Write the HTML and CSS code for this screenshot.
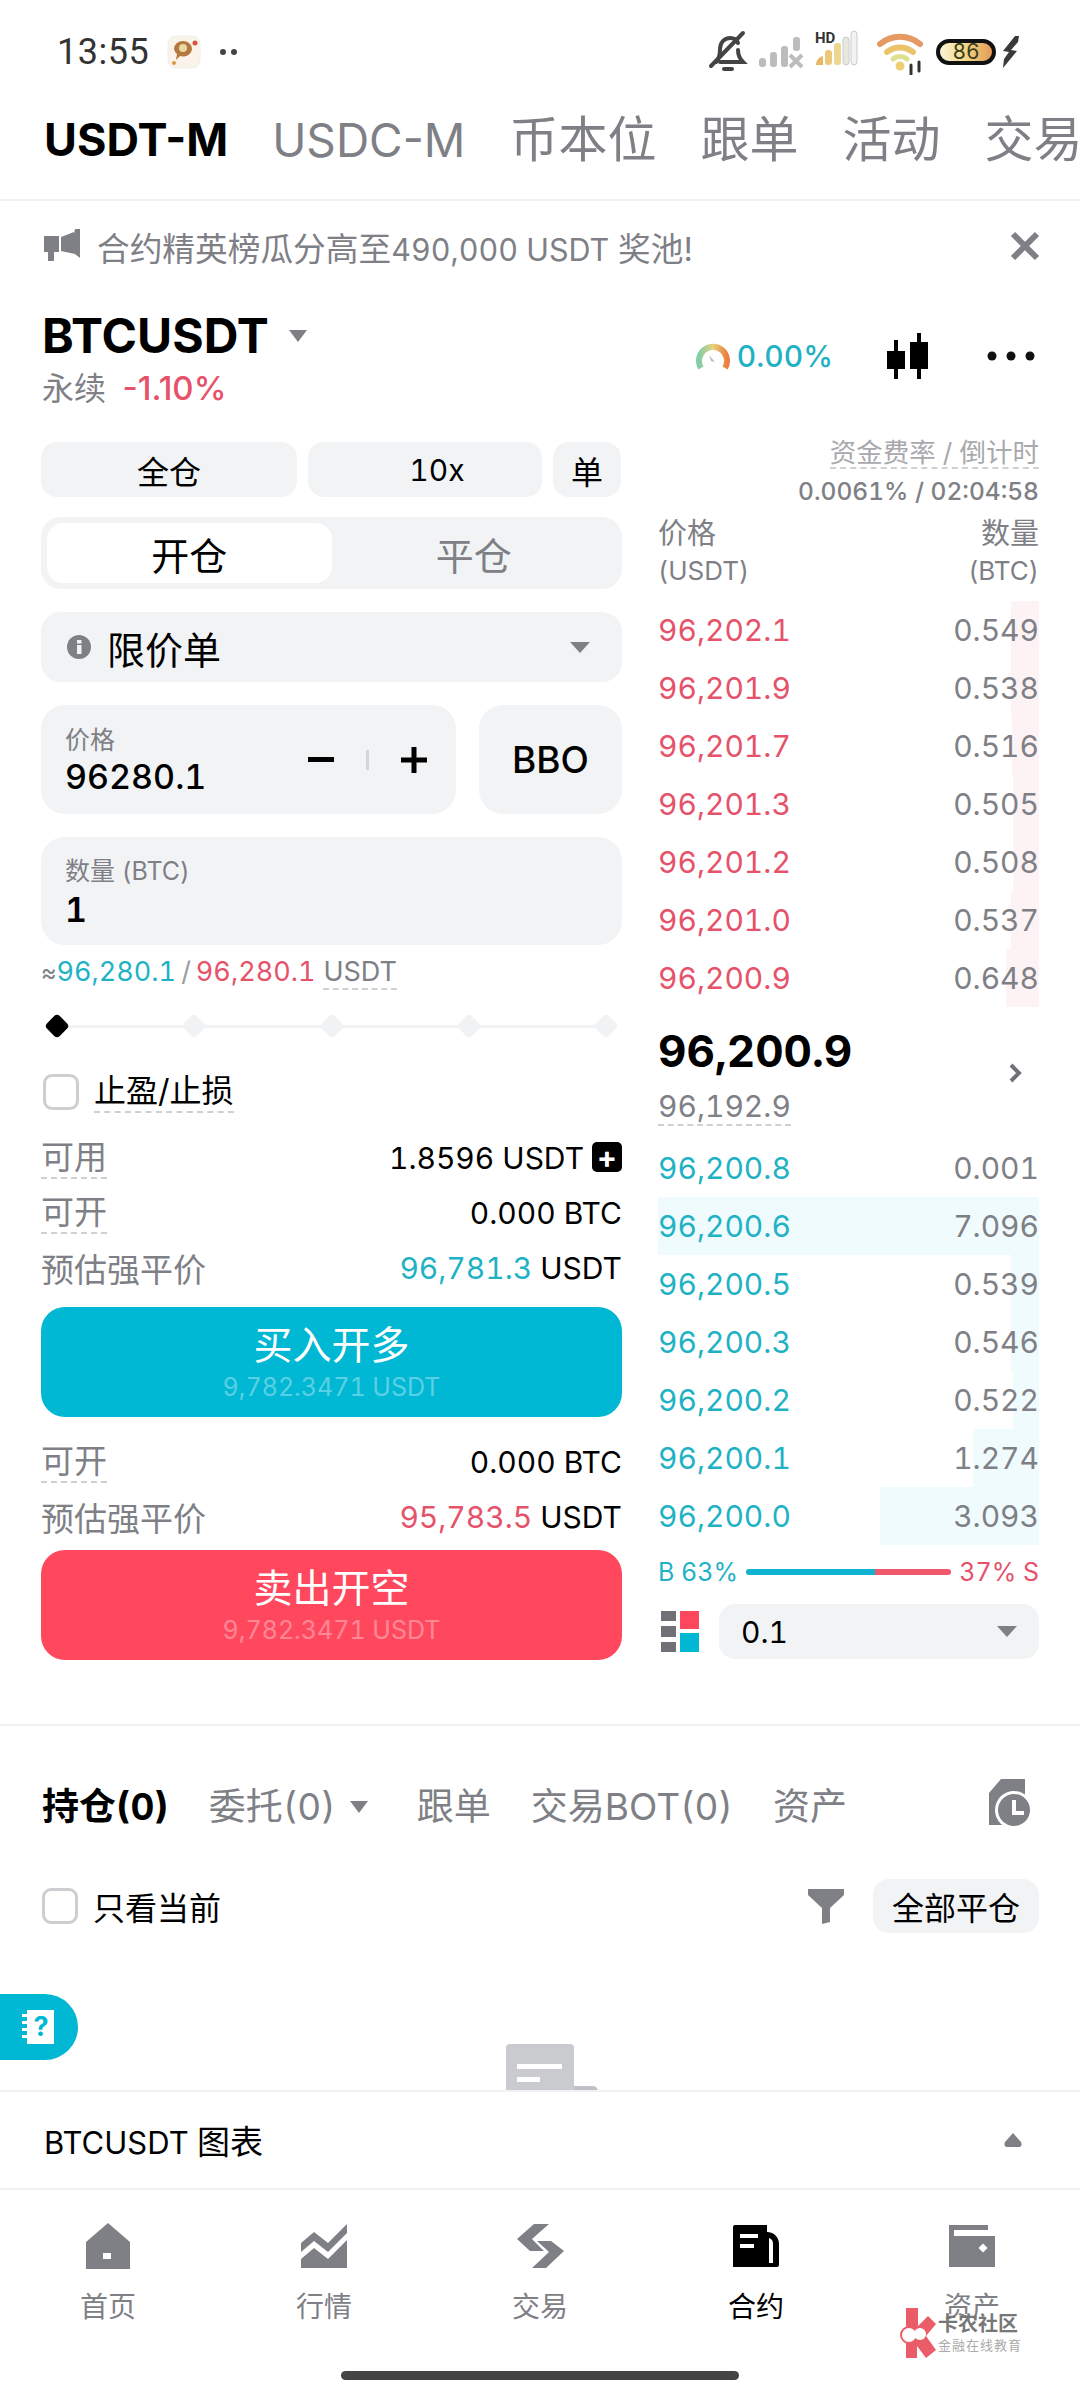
FILE: index.html
```html
<!DOCTYPE html>
<html lang="zh-CN">
  <head>
    <meta charset="UTF-8" />
    <meta name="viewport" content="width=device-width, initial-scale=1.0" />
    <title>合约交易</title>
    <link rel="stylesheet" href="styles.css">
  </head>
  <body>
    <div class="page">
      <!-- Status bar -->
      <div class="status-bar">
        <span class="time">13:55</span>
        <svg class="app-icon" width="36" height="36" viewBox="0 0 36 36">
          <rect x="2" y="2" width="32" height="32" rx="8" fill="#fbf3ea" stroke="#eee" />
          <path d="M8 15a9 8 0 0 1 18 0a9 8 0 0 1-12 7l-4 4l1-6a8 8 0 0 1-3-5z" fill="#b5793f" />
          <circle cx="17" cy="14" r="4" fill="#e8d9a0" />
          <circle cx="29" cy="9" r="2.5" fill="#d8553f" />
          <circle cx="8" cy="29" r="2" fill="#d99a3f" />
        </svg>
        <span class="status-dots"><i></i><i></i></span>
        <div class="status-right">
          <svg class="bell" width="40" height="44" viewBox="0 0 40 44" fill="none" stroke="#444" stroke-width="4" stroke-linecap="round">
            <path d="M8 32c3-3 4-7 4-13c0-6 4-11 10-11c4 0 7 2 8 5M30 20c0 5 2 9 5 12H12" />
            <path d="M3 36L35 3" />
            <path d="M16 39h8" />
          </svg>
          <svg width="50" height="40" viewBox="0 0 50 40" fill="#bcbcbc">
            <rect x="2" y="26" width="7" height="9" rx="3" />
            <rect x="13" y="20" width="7" height="15" rx="3" />
            <rect x="24" y="14" width="7" height="21" rx="3" />
            <rect x="36" y="5" width="7" height="14" rx="3" />
            <path d="M33 23l12 12M45 23l-12 12" stroke="#bcbcbc" stroke-width="4" />
          </svg>
          <div class="hd-signal">
            <span class="hd">HD</span>
            <svg width="44" height="38" viewBox="0 0 44 38">
              <path d="M1 35c0-5 3-8 7-9v9z" fill="#e6b96a" />
              <rect x="10" y="20" width="7" height="15" rx="3" fill="#ecc97a" />
              <rect x="19" y="13" width="7" height="22" rx="3" fill="#ecd78f" />
              <rect x="28" y="7" width="6" height="28" rx="3" fill="#e8e8e0" stroke="#ccc" />
              <rect x="36" y="1" width="6" height="34" rx="3" fill="#f2f2f2" stroke="#ccc" />
            </svg>
          </div>
          <svg class="wifi" width="50" height="46" viewBox="0 0 50 46" fill="none" stroke-linecap="round">
            <path d="M3 15a31 31 0 0 1 40 0" stroke="#e49a62" stroke-width="6" />
            <path d="M10 23a21 21 0 0 1 26 0" stroke="#eac36b" stroke-width="6" />
            <path d="M16 30a11 11 0 0 1 14 0" stroke="#dfe08e" stroke-width="5" />
            <circle cx="23" cy="37" r="4.500" fill="#efcf72" />
            <path d="M34 36v9M42 33v9" stroke="#333" stroke-width="3" />
          </svg>
          <div class="battery"><span>86</span></div>
          <svg width="18" height="32" viewBox="0 0 18 32" fill="#3a3a3a">
            <path d="M13 0L1 15l6 1l-5 7l-1 9l14-17l-6-1l7-8l1-6z" />
          </svg>
        </div>
      </div>

      <!-- Product tabs -->
      <div class="top-tabs">
        <a href="#" class="active">USDT-M</a>
        <a href="#">USDC-M</a>
        <a href="#" class="cjk">币本位</a>
        <a href="#" class="cjk">跟单</a>
        <a href="#" class="cjk">活动</a>
        <a href="#" class="cjk">交易</a>
      </div>

      <!-- Notice -->
      <div class="notice">
        <svg width="36" height="36" viewBox="0 0 36 36" fill="#7e8086">
          <path d="M0 8h15v16H10v9H4v-9H0z" />
          <path d="M17 9L30 4v2L31 1h5v29l-5-4L17 23z" />
        </svg>
        <span class="notice-text">合约精英榜瓜分高至<span class="latin">490,000 USDT</span> 奖池!</span>
        <svg class="notice-close" width="30" height="30" viewBox="0 0 30 30" stroke="#7e8086" stroke-width="6">
          <path d="M3 3l24 24M27 3L3 27" />
        </svg>
      </div>

      <!-- Symbol header -->
      <div class="symbol-head">
        <div>
          <div class="symbol-name">BTCUSDT<i class="caret small"></i></div>
          <div class="symbol-sub">永续 <span class="red">-1.10%</span></div>
        </div>
        <div class="symbol-tools">
          <svg width="34" height="28" viewBox="0 0 34 28" fill="none" stroke-width="6">
            <defs>
              <linearGradient id="gauge" x1="0" x2="1" y1="0" y2="0">
                <stop offset="0" stop-color="#7fcfa8" />
                <stop offset="0.5" stop-color="#e8d27a" />
                <stop offset="1" stop-color="#ea7f3f" />
              </linearGradient>
            </defs>
            <path d="M5 26a14 14 0 1 1 24 0" stroke="url(#gauge)" />
            <path d="M13 13l6 7l-4-1z" fill="#bbb" />
          </svg>
          <span class="gauge-value">0.00%</span>
          <svg class="candle" width="44" height="46" viewBox="0 0 44 46" fill="#000">
            <rect x="8" y="7" width="4" height="39" />
            <rect x="31" y="0" width="4" height="46" />
            <rect x="1" y="18" width="18" height="18" />
            <rect x="24" y="9" width="18" height="27" />
          </svg>
          <svg class="more" width="48" height="10" viewBox="0 0 48 10" fill="#111">
            <circle cx="5" cy="5" r="4.500" />
            <circle cx="24" cy="5" r="4.500" />
            <circle cx="43" cy="5" r="4.500" />
          </svg>
        </div>
      </div>

      <div class="trade">
        <!-- Order form -->
        <div class="form">
          <div class="margin-row">
            <a href="#" class="chip cross">全仓</a>
            <a href="#" class="chip lever">10x</a>
            <a href="#" class="chip mode">单</a>
          </div>
          <div class="switch">
            <span class="switch-item on">开仓</span>
            <span class="switch-item">平仓</span>
          </div>
          <div class="order-type">
            <svg width="24" height="24" viewBox="0 0 24 24">
              <circle cx="12" cy="12" r="12" fill="#7e8086" />
              <rect x="10" y="10" width="4.500" height="9" fill="#f2f3f5" />
              <rect x="10" y="5" width="4.500" height="3.500" fill="#f2f3f5" />
            </svg>
            <span class="order-type-text">限价单</span>
            <i class="caret"></i>
          </div>
          <div class="price-row">
            <div class="field price-field">
              <div>
                <div class="field-label">价格</div>
                <div class="field-value">96280.1</div>
              </div>
              <div class="stepper">
                <svg width="28" height="28" viewBox="0 0 28 28" fill="#000"><rect x="1" y="11" width="26" height="5" /></svg>
                <i class="stepper-line"></i>
                <svg width="28" height="28" viewBox="0 0 28 28" fill="#000"><path d="M1 11.500h10.500V1h5v10.500H27v5H16.500V27h-5V16.500H1z" /></svg>
              </div>
            </div>
            <a href="#" class="bbo">BBO</a>
          </div>
          <div class="field qty-field">
            <div class="field-label">数量 (BTC)</div>
            <div class="field-value">1</div>
          </div>
          <div class="approx">
            <span class="grey">≈</span><span class="teal">96,280.1</span>
            <span class="slash">/</span>
            <span class="red">96,280.1</span>
            <span class="approx-unit">USDT</span>
          </div>
          <div class="slider">
            <i class="node current"></i><i class="node"></i><i class="node"></i><i class="node"></i><i class="node"></i>
          </div>
          <label class="check tp-sl">
            <i class="box"></i>
            <span class="dashed">止盈/止损</span>
          </label>

          <div class="info-rows">
            <div class="info"><span class="info-key dashed">可用</span><span class="info-val">1.8596 USDT<b class="add">+</b></span></div>
            <div class="info"><span class="info-key dashed">可开</span><span class="info-val">0.000 BTC</span></div>
            <div class="info"><span class="info-key">预估强平价</span><span class="info-val"><span class="teal">96,781.3</span> USDT</span></div>
          </div>
          <a href="#" class="action buy">
            <span class="action-title">买入开多</span>
            <span class="action-sub">9,782.3471 USDT</span>
          </a>
          <div class="info-rows second">
            <div class="info"><span class="info-key dashed">可开</span><span class="info-val">0.000 BTC</span></div>
            <div class="info"><span class="info-key">预估强平价</span><span class="info-val"><span class="red">95,783.5</span> USDT</span></div>
          </div>
          <a href="#" class="action sell">
            <span class="action-title">卖出开空</span>
            <span class="action-sub">9,782.3471 USDT</span>
          </a>
        </div>

        <!-- Order book -->
        <div class="book">
          <div class="funding">
            <span class="funding-title">资金费率 / 倒计时</span>
            <span class="funding-value">0.0061% / 02:04:58</span>
          </div>
          <div class="book-head">
            <div><span class="head-cjk">价格</span><br />(USDT)</div>
            <div class="right"><span class="head-cjk">数量</span><br />(BTC)</div>
          </div>
          <div class="levels asks">
            <div class="level"><i class="depth" style="width:7.300%"></i><span>96,202.1</span><span>0.549</span></div>
            <div class="level"><i class="depth" style="width:7.300%"></i><span>96,201.9</span><span>0.538</span></div>
            <div class="level"><i class="depth" style="width:7%"></i><span>96,201.7</span><span>0.516</span></div>
            <div class="level"><i class="depth" style="width:6.800%"></i><span>96,201.3</span><span>0.505</span></div>
            <div class="level"><i class="depth" style="width:6.900%"></i><span>96,201.2</span><span>0.508</span></div>
            <div class="level"><i class="depth" style="width:7.300%"></i><span>96,201.0</span><span>0.537</span></div>
            <div class="level"><i class="depth" style="width:8.700%"></i><span>96,200.9</span><span>0.648</span></div>
          </div>
          <div class="mid">
            <div>
              <div class="mid-price">96,200.9</div>
              <div class="mark-price"><span class="dashed">96,192.9</span></div>
            </div>
            <svg width="14" height="20" viewBox="0 0 14 20" fill="none" stroke="#6f7177" stroke-width="4">
              <path d="M2 2l8 8l-8 8" />
            </svg>
          </div>
          <div class="levels bids">
            <div class="level"><span>96,200.8</span><span>0.001</span></div>
            <div class="level"><i class="depth" style="width:100%"></i><span>96,200.6</span><span>7.096</span></div>
            <div class="level"><i class="depth" style="width:7.300%"></i><span>96,200.5</span><span>0.539</span></div>
            <div class="level"><i class="depth" style="width:7.300%"></i><span>96,200.3</span><span>0.546</span></div>
            <div class="level"><i class="depth" style="width:6.900%"></i><span>96,200.2</span><span>0.522</span></div>
            <div class="level"><i class="depth" style="width:17.300%"></i><span>96,200.1</span><span>1.274</span></div>
            <div class="level"><i class="depth" style="width:41.700%"></i><span>96,200.0</span><span>3.093</span></div>
          </div>
          <div class="ratio">
            <span class="teal">B 63%</span>
            <div class="ratio-bar"><i class="ratio-buy"></i><i class="ratio-sell"></i></div>
            <span class="red">37% S</span>
          </div>
          <div class="tick-row">
            <svg width="38" height="42" viewBox="0 0 38 42">
              <rect x="0" y="0" width="15" height="10" fill="#6f7177" />
              <rect x="0" y="15" width="15" height="11" fill="#6f7177" />
              <rect x="0" y="31" width="15" height="10" fill="#6f7177" />
              <rect x="19" y="0" width="19" height="18" fill="#ff475d" />
              <rect x="19" y="22" width="19" height="19" fill="#00b7d4" />
            </svg>
            <div class="tick-select"><span>0.1</span><i class="caret"></i></div>
          </div>
        </div>
      </div>

      <!-- Positions -->
      <div class="positions">
        <div class="pos-tabs">
          <a href="#" class="active">持仓(0)</a>
          <a href="#" class="orders">委托(0)<i class="caret small"></i></a>
          <a href="#">跟单</a>
          <a href="#">交易BOT(0)</a>
          <a href="#">资产</a>
          <svg class="history" width="44" height="50" viewBox="0 0 44 50">
            <path d="M12 0h24v46H0V14z" fill="#7e8086" />
            <circle cx="25" cy="31" r="19" fill="#fff" />
            <circle cx="25" cy="31" r="16" fill="#7e8086" />
            <path d="M23 21h4v11h8v4H23z" fill="#fff" />
          </svg>
        </div>
        <div class="pos-filter">
          <label class="check">
            <i class="box"></i>
            <span class="only-current">只看当前</span>
          </label>
          <div class="pos-actions">
            <svg width="36" height="36" viewBox="0 0 36 36" fill="#7e8086">
              <path d="M0 1h36v6L22 20v14l-8 2V20L0 7z" />
            </svg>
            <a href="#" class="close-all">全部平仓</a>
          </div>
        </div>
        <div class="empty">
          <svg width="92" height="48" viewBox="0 0 92 48">
            <path d="M4 0h60a4 4 0 0 1 4 4v44H0V4a4 4 0 0 1 4-4z" fill="#c9cbcf" />
            <rect x="11" y="20" width="45" height="5" fill="#fff" />
            <rect x="11" y="33" width="23" height="5" fill="#fff" />
            <path d="M68 42h18q6 0 6 6H68z" fill="#bfc1c6" />
          </svg>
        </div>
        <div class="help">
          <svg width="32" height="34" viewBox="0 0 32 34" fill="#fff">
            <path d="M5 0h27v34H5zM0 4h7v3H0zM0 11h7v3H0zM0 18h7v3H0zM0 25h7v3H0z" />
            <text x="19" y="26" class="help-mark" text-anchor="middle">?</text>
          </svg>
        </div>
      </div>

      <div class="chart-bar">
        <span>BTCUSDT <span class="chart-cjk">图表</span></span>
        <svg width="18" height="14" viewBox="0 0 18 14" fill="#7e8086">
          <path d="M9 0L17 9q2 5-3 5H4q-5 0-3-5z" />
        </svg>
      </div>

      <!-- Bottom navigation -->
      <nav class="tab-bar">
        <a href="#">
          <svg width="46" height="46" viewBox="0 0 46 46">
            <path d="M23 0L45 19v27H1V19z" fill="#7e8086" />
            <rect x="18" y="30" width="8" height="6" fill="#fff" />
          </svg>
          首页
        </a>
        <a href="#">
          <svg width="46" height="46" viewBox="0 0 46 46" fill="#7e8086">
            <path d="M0 20L13 9L27 20L46 1V10L27 29L13 18L0 29z" />
            <path d="M0 36L13 25L27 36L46 17V45H0z" />
          </svg>
          行情
        </a>
        <a href="#">
          <svg width="47" height="46" viewBox="0 0 47 46" fill="#7e8086">
            <path d="M17 1h15L15 16L27 28H13L0 16z" />
            <path d="M20 18h14L47 28L29 45H15L32 29z" />
          </svg>
          交易
        </a>
        <a href="#" class="active">
          <svg width="46" height="46" viewBox="0 0 46 46">
            <path d="M2 2h32v7c7 0 12 5 12 12v21a2 2 0 0 1-2 2H0V4a2 2 0 0 1 2-2z" fill="#000" />
            <rect x="7" y="11" width="18" height="4" fill="#fff" />
            <rect x="7" y="21" width="14" height="4" fill="#fff" />
            <path d="M36 15c3 1 4 3 4 6v19h-4z" fill="#fff" />
          </svg>
          合约
        </a>
        <a href="#">
          <svg width="46" height="46" viewBox="0 0 46 46">
            <path d="M0 2h39v5H5v6h41v31H0z" fill="#7e8086" />
            <path d="M34 20.500l4.500 4.500l-4.500 4.500l-4.500-4.500z" fill="#fff" />
          </svg>
          资产
        </a>
      </nav>

      <div class="watermark">
        <svg width="36" height="50" viewBox="0 0 36 50">
          <path d="M6 0h12v18l10-10l8 8l-10 12l10 14l-10 8l-9-12v12H6z" fill="#ea5d68" />
          <circle cx="9" cy="27" r="8" fill="#fff" stroke="#ea5d68" stroke-width="2" />
          <circle cx="20" cy="26" r="6" fill="#fff" />
        </svg>
        <div>
          <div class="wm-title">卡农社区</div>
          <div class="wm-sub">金融在线教育</div>
        </div>
      </div>
      <div class="home-bar"></div>
    </div>
  </body>
</html>
```

FILE: styles.css
```css
* {
  margin: 0;
  padding: 0;
  box-sizing: border-box;
  font-family: Inter, "Noto Sans CJK SC", sans-serif;
  font-variant-numeric: tabular-nums;
}

body {
  background-color: white;
  color: #000;
}

a {
  color: inherit;
  text-decoration: none;
}

i {
  display: block;
  font-style: normal;
}

.page {
  position: relative;
  display: flex;
  flex-direction: column;
  width: 1080px;
  height: 2400px;
  overflow: hidden;
}

.teal {
  color: #1fb2c5;
}

.red {
  color: #e5526a;
}

.grey {
  color: #7e8086;
}

.dashed {
  border-bottom: 2px dashed #cfd0d3;
}

.caret {
  width: 0;
  height: 0;
  border-left: 10px solid transparent;
  border-right: 10px solid transparent;
  border-top: 11px solid #7e8086;
}

.caret.small {
  display: inline-block;
  border-left-width: 9px;
  border-right-width: 9px;
  border-top-width: 12px;
}

/* Status bar */
.status-bar {
  display: flex;
  align-items: center;
  height: 100px;
  padding: 4px 60px 0 57px;
}

.time {
  font-family: Roboto, sans-serif;
  font-size: 36px;
  color: #333;
  letter-spacing: 0.5px;
}

.app-icon {
  margin-left: 17px;
}

.status-dots {
  display: flex;
  gap: 5px;
  margin-left: 18px;
}

.status-dots i {
  width: 6px;
  height: 6px;
  border-radius: 50%;
  background-color: #444;
}

.status-right {
  display: flex;
  align-items: center;
  margin-left: auto;
}

.status-right svg {
  flex: none;
}

.bell {
  margin-right: 9px;
}

.hd-signal {
  position: relative;
  margin-left: 8px;
  margin-top: -2px;
}

.hd {
  position: absolute;
  top: 1px;
  left: 0;
  font-family: Roboto, sans-serif;
  font-weight: 700;
  font-size: 15px;
  line-height: 15px;
  color: #333;
}

.wifi {
  margin-left: 18px;
}

.battery {
  width: 60px;
  height: 26px;
  margin-left: 9px;
  border: 4px solid #111;
  border-radius: 13px;
  background: linear-gradient(to right, #f8f3d8 0%, #f1dc8a 45%, #e59a55 100%);
  font-family: Roboto, sans-serif;
  font-size: 21px;
  line-height: 18px;
  text-align: center;
  color: #3d3b1c;
}

.battery + svg {
  margin-left: 6px;
}

/* Product tabs */
.top-tabs {
  display: flex;
  align-items: center;
  gap: 44px;
  height: 101px;
  padding: 0 0 20px 44px;
  border-bottom: 2px solid #f0f1f2;
  font-size: 46px;
  line-height: 56px;
  color: #7e8086;
  white-space: nowrap;
  overflow: hidden;
}

.top-tabs a {
  font-variant-numeric: normal;
}

.top-tabs .active {
  color: #000;
  font-weight: 700;
  font-size: 45px;
}

.top-tabs .cjk {
  font-size: 49px;
}

/* Notice */
.notice {
  display: flex;
  align-items: center;
  height: 90px;
  padding: 0 40px 0 44px;
}

.notice-text {
  margin-left: 17px;
  font-size: 32.700px;
  color: #7e8086;
}

.notice-text .latin {
  font-size: 30.500px;
}

.notice-close {
  margin-left: auto;
}

/* Symbol header */
.symbol-head {
  display: flex;
  justify-content: space-between;
  height: 151px;
  padding: 20px 45px 0 42px;
}

.symbol-name {
  font-size: 48px;
  font-weight: 700;
  line-height: 50px;
}

.symbol-name .caret {
  margin: 0 0 8px 20px;
  vertical-align: middle;
}

.symbol-sub {
  margin-top: 7px;
  font-size: 32px;
  line-height: 40px;
  color: #7e8086;
}

.symbol-sub .red {
  margin-left: 8px;
  font-size: 33px;
  font-weight: 500;
  font-variant-numeric: normal;
}

.symbol-tools {
  display: flex;
  align-items: center;
  height: 82px;
  margin-top: 4px;
}

.gauge-value {
  margin-left: 7px;
  font-size: 30px;
  font-weight: 500;
  color: #1fb2c5;
}

.candle {
  margin-left: 53px;
}

.more {
  margin-left: 57px;
}

/* Trade panels */
.trade {
  display: grid;
  grid-template-columns: 581px 381px;
  column-gap: 36px;
  padding-left: 41px;
}

.margin-row {
  display: flex;
  gap: 11px;
  height: 55px;
}

.chip {
  display: flex;
  justify-content: center;
  align-items: center;
  border-radius: 16px;
  background-color: #f2f3f5;
  font-size: 32px;
}

.cross {
  width: 256px;
}

.lever {
  width: 234px;
  padding-left: 24px;
  font-size: 30px;
}

.mode {
  width: 68px;
}

.switch {
  display: flex;
  height: 72px;
  margin-top: 20px;
  padding: 6px;
  border-radius: 20px;
  background-color: #f2f3f5;
}

.switch-item {
  display: flex;
  flex: 1;
  justify-content: center;
  align-items: center;
  border-radius: 16px;
  font-size: 38px;
  color: #7e8086;
}

.switch-item.on {
  background-color: white;
  color: #000;
}

.order-type {
  display: flex;
  align-items: center;
  height: 70px;
  margin-top: 23px;
  padding: 0 32px 0 26px;
  border-radius: 20px;
  background-color: #f2f3f5;
}

.order-type-text {
  margin-left: 16px;
  font-size: 38px;
}

.order-type .caret {
  margin-left: auto;
}

.price-row {
  display: flex;
  gap: 23px;
  margin-top: 23px;
}

.field {
  border-radius: 24px;
  background-color: #f2f3f5;
}

.price-field {
  display: flex;
  justify-content: space-between;
  align-items: center;
  width: 415px;
  height: 109px;
  padding: 0 28px 0 24px;
}

.qty-field {
  height: 108px;
  margin-top: 23px;
  padding: 17px 24px 0;
}

.field-label {
  font-size: 25px;
  line-height: 34px;
  color: #7e8086;
}

.field-value {
  font-size: 34px;
  font-weight: 500;
  line-height: 40px;
}

.qty-field .field-value {
  margin-top: 2px;
  font-weight: 600;
}

.stepper {
  display: flex;
  align-items: center;
  gap: 31px;
}

.stepper-line {
  width: 3px;
  height: 20px;
  background-color: #d4d5d8;
}

.bbo {
  display: flex;
  flex: 1;
  justify-content: center;
  align-items: center;
  border-radius: 24px;
  background-color: #f2f3f5;
  font-size: 37px;
  font-weight: 500;
}

.approx {
  display: flex;
  align-items: baseline;
  gap: 5px;
  height: 55px;
  padding-top: 10px;
  font-size: 27px;
}

.approx .grey {
  margin-right: -5px;
  font-size: 24px;
}

.slash {
  color: #9a9ca1;
}

.approx-unit {
  margin-left: 3px;
  border-bottom: 2px dashed #cfd0d3;
  color: #7e8086;
}

.slider {
  position: relative;
  display: flex;
  justify-content: space-between;
  align-items: center;
  height: 24px;
  margin-top: 14px;
  padding: 0 7px;
}

.slider::before {
  content: "";
  position: absolute;
  top: 11px;
  left: 14px;
  right: 14px;
  height: 3px;
  background-color: #f1f2f3;
}

.node {
  position: relative;
  width: 18px;
  height: 18px;
  border-radius: 4px;
  background-color: #f1f2f3;
  transform: rotate(45deg);
}

.node.current {
  background-color: #000;
}

.check {
  display: flex;
  align-items: center;
}

.box {
  width: 36px;
  height: 36px;
  border: 3px solid #cdced1;
  border-radius: 9px;
  background-color: white;
}

.tp-sl {
  gap: 15px;
  height: 40px;
  margin-top: 34px;
  margin-left: 2px;
  font-size: 32px;
}

.tp-sl .dashed {
  line-height: 40px;
}

.info-rows {
  margin-top: 18px;
}

.info-rows.second {
  margin-top: 17px;
}

.info {
  display: flex;
  justify-content: space-between;
  align-items: center;
  height: 55px;
  font-size: 30px;
}

.info-key {
  color: #7e8086;
  font-size: 33px;
}

.info-key.dashed {
  line-height: 40px;
}

.add {
  display: inline-flex;
  justify-content: center;
  align-items: center;
  width: 30px;
  height: 30px;
  margin-left: 8px;
  border-radius: 5px;
  background-color: #000;
  color: white;
  font-size: 30px;
  line-height: 28px;
  font-weight: 700;
  vertical-align: 1px;
}

.action {
  display: flex;
  flex-direction: column;
  align-items: center;
  height: 110px;
  margin-top: 12px;
  padding-top: 15px;
  border-radius: 24px;
  color: white;
}

.buy {
  background-color: #00b7d4;
}

.sell {
  margin-top: 6px;
  background-color: #ff475d;
}

.action-title {
  font-size: 39px;
  line-height: 46px;
}

.action-sub {
  margin-top: 3px;
  font-size: 25px;
  line-height: 32px;
  opacity: 0.35;
}

/* Order book */
.book {
  margin-top: -4px;
}

.funding {
  display: flex;
  flex-direction: column;
  align-items: flex-end;
  height: 67px;
  font-size: 24.500px;
  line-height: 32px;
}

.funding-title {
  border-bottom: 2px dashed #cfd0d3;
  color: #a7a9ad;
  font-size: 26.500px;
  line-height: 29px;
}

.funding-value {
  margin-top: 6px;
  color: #7e8086;
  font-weight: 500;
}

.book-head {
  display: flex;
  justify-content: space-between;
  height: 96px;
  padding-top: 11px;
  font-size: 26px;
  line-height: 36px;
  color: #7e8086;
}

.book-head .right {
  text-align: right;
}

.head-cjk {
  font-size: 29px;
}

.level {
  position: relative;
  display: flex;
  justify-content: space-between;
  align-items: center;
  height: 58px;
  font-size: 30px;
  color: #7e8086;
}

.level span {
  position: relative;
}

.depth {
  position: absolute;
  top: 0;
  right: 0;
  bottom: 0;
}

.asks .depth {
  background-color: #fdf3f5;
}

.bids .depth {
  background-color: #f0fbfd;
}

.asks .level span:first-of-type {
  color: #e5526a;
}

.bids .level span:first-of-type {
  color: #1fb2c5;
}

.mid {
  display: flex;
  justify-content: space-between;
  align-items: center;
  height: 132px;
  padding-right: 16px;
}

.mid-price {
  font-size: 44px;
  font-weight: 700;
  line-height: 58px;
}

.mark-price {
  margin-top: 8px;
  font-size: 30px;
  line-height: 36px;
  color: #7e8086;
}

.ratio {
  display: flex;
  align-items: center;
  gap: 8px;
  height: 54px;
  font-size: 25px;
  white-space: nowrap;
}

.ratio-bar {
  display: flex;
  flex: 1;
  height: 6px;
  border-radius: 3px;
  overflow: hidden;
}

.ratio-buy {
  width: 63%;
  background-color: #10b3cf;
}

.ratio-sell {
  flex: 1;
  background-color: #f0586c;
}

.tick-row {
  display: flex;
  justify-content: space-between;
  align-items: center;
  margin-top: 5px;
  padding-left: 3px;
}

.tick-select {
  display: flex;
  justify-content: space-between;
  align-items: center;
  width: 320px;
  height: 55px;
  padding: 0 22px;
  border-radius: 16px;
  background-color: #f2f3f5;
  font-size: 30px;
}

/* Positions */
.positions {
  position: relative;
  flex: 1;
  margin-top: 64px;
  border-top: 2px solid #f0f1f2;
  overflow: hidden;
}

.pos-tabs {
  display: flex;
  align-items: center;
  gap: 40px;
  height: 104px;
  margin-top: 26px;
  padding: 0 47px 0 42px;
  font-size: 37px;
  color: #7e8086;
  white-space: nowrap;
}

.pos-tabs .active {
  color: #000;
  font-weight: 700;
}

.pos-tabs .caret {
  display: inline-block;
  margin: 0 0 6px 14px;
  vertical-align: middle;
}

.orders {
  margin-right: 9px;
}

.history {
  margin-left: auto;
}

.pos-filter {
  display: flex;
  justify-content: space-between;
  align-items: center;
  height: 54px;
  margin-top: 23px;
  padding: 0 41px 0 42px;
}

.pos-filter .check {
  gap: 15px;
}

.only-current {
  font-size: 32px;
}

.pos-actions {
  display: flex;
  align-items: center;
  gap: 29px;
}

.close-all {
  display: flex;
  justify-content: center;
  align-items: center;
  width: 166px;
  height: 54px;
  border-radius: 16px;
  background-color: #f2f3f5;
  font-size: 32px;
}

.empty {
  display: flex;
  justify-content: center;
  margin-top: 111px;
  padding-left: 24px;
}

/* Floating help button, over the position list */
.help {
  position: absolute;
  top: 268px;
  left: 0;
  display: flex;
  align-items: center;
  width: 78px;
  height: 66px;
  padding-left: 22px;
  border-radius: 0 33px 33px 0;
  background-color: #00b7d4;
}

.help-mark {
  font-family: Inter, sans-serif;
  font-size: 27px;
  font-weight: 700;
  fill: #00b7d4;
}

.chart-bar {
  display: flex;
  justify-content: space-between;
  align-items: center;
  height: 100px;
  padding: 0 58px 0 44px;
  border-top: 2px solid #f0f1f2;
  border-bottom: 2px solid #f0f1f2;
  font-size: 31px;
}

.chart-cjk {
  font-size: 33px;
}

/* Bottom navigation */
.tab-bar {
  display: flex;
  height: 210px;
  padding-top: 33px;
}

.tab-bar a {
  display: flex;
  flex-direction: column;
  flex: 1;
  align-items: center;
  gap: 20px;
  font-size: 28px;
  line-height: 36px;
  color: #7e8086;
}

.tab-bar a.active {
  color: #000;
}

/* Community stamp over the nav bar */
.watermark {
  position: absolute;
  top: 2308px;
  left: 900px;
  display: flex;
  gap: 2px;
  align-items: center;
}

.wm-title {
  font-size: 20px;
  font-weight: 700;
  line-height: 24px;
  color: #777;
}

.wm-sub {
  font-size: 13px;
  line-height: 18px;
  color: #aaa;
  letter-spacing: 1px;
}

.home-bar {
  position: absolute;
  left: 341px;
  bottom: 20px;
  width: 398px;
  height: 9px;
  border-radius: 5px;
  background-color: #444;
}
```
